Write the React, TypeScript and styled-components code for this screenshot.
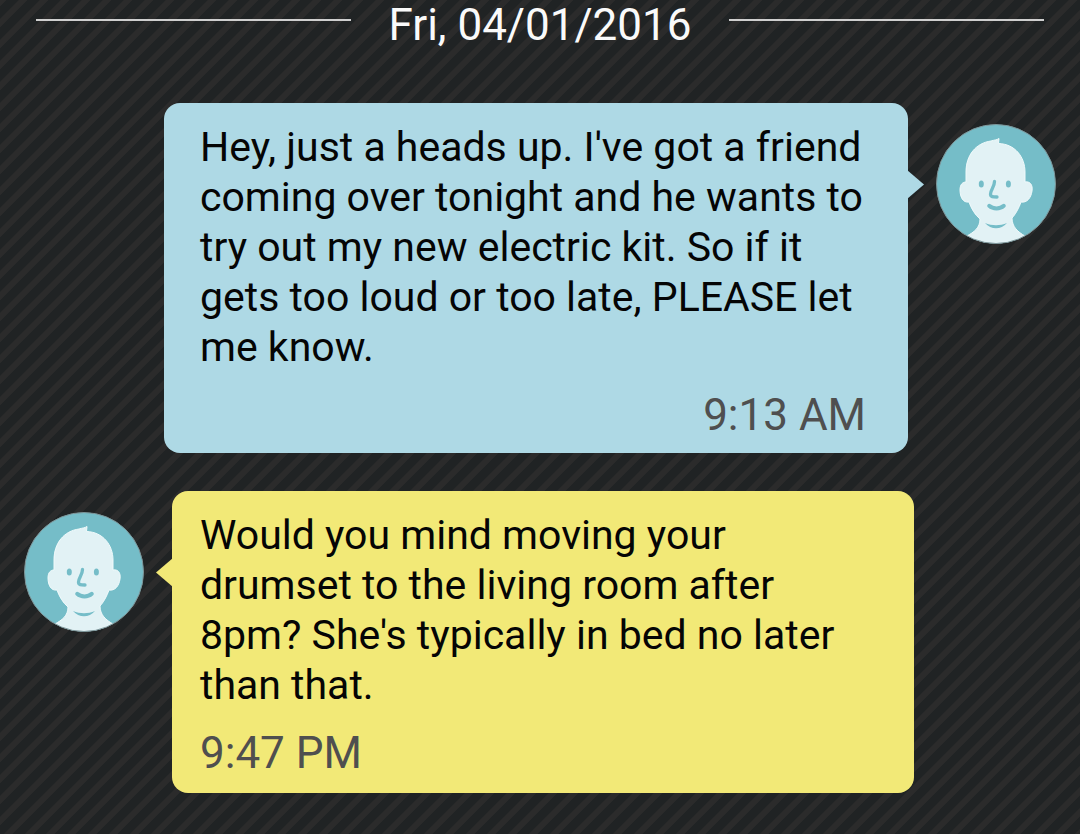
import React from "react";
import styled, { createGlobalStyle } from "styled-components";

const GlobalStyle = createGlobalStyle`
  *, *::before, *::after { box-sizing: border-box; }
  body {
    margin: 0;
    min-height: 100vh;
    background: linear-gradient(
      135deg,
      #2b2b2b 0 14%, #202324 16% 44%,
      #2b2b2b 46% 64%, #202324 66% 94%, #2b2b2b 96%
    ) 0 0 / 21px 21px;
    font-family: Roboto, "Liberation Sans", sans-serif;
  }
`;

const Conversation = styled.main`
  display: flex;
  flex-direction: column;
  gap: 38px;
`;

const DateDivider = styled.header`
  display: flex;
  align-items: flex-start;
  gap: 37px;
  padding: 0 36px;
  height: 65px;
  color: #fafafa;
  font-size: 44px;
  line-height: 50px;
  white-space: nowrap;
  &::before, &::after {
    content: "";
    flex: 1;
    height: 2px;
    margin-top: 19px;
    background: #cfcfcf;
  }
`;

const DateLabel = styled.time``;

const Row = styled.article<{ $sent?: boolean }>`
  display: flex;
  flex-direction: ${(p) => (p.$sent ? "row-reverse" : "row")};
  align-items: flex-start;
  gap: 28px;
  padding: 0 24px;
`;

const Avatar = styled.svg`
  flex: none;
  width: 120px;
  height: 120px;
  margin-top: 21px;
`;

const Bubble = styled.div<{ $sent?: boolean }>`
  position: relative;
  flex: 1;
  margin: ${(p) => (p.$sent ? "0 0 0 140px" : "0 142px 0 0")};
  padding: ${(p) => (p.$sent ? "19px 28px 13px 36px" : "19px 36px 15px 28px")};
  border-radius: 16px;
  background: ${(p) => (p.$sent ? "#aed9e5" : "#f2e977")};
  &::after {
    content: "";
    position: absolute;
    top: 67px;
    ${(p) => (p.$sent ? "right: -16px;" : "left: -16px;")}
    width: 17px;
    height: 29px;
    background: inherit;
    clip-path: ${(p) => (p.$sent ? "polygon(0 0, 100% 50%, 0 100%)" : "polygon(100% 0, 0 50%, 100% 100%)")};
  }
`;

const Message = styled.p`
  margin: 0;
  color: #050505;
  font-size: 41px;
  line-height: 50px;
`;

const Stamp = styled.time<{ $sent?: boolean }>`
  display: block;
  margin-top: 18px;
  padding-right: 14px;
  color: #4f4f4f;
  font-size: 44px;
  line-height: 50px;
  text-align: ${(p) => (p.$sent ? "right" : "left")};
`;

const Face = ({ id }: { id: string }) => (
  <Avatar viewBox="0 0 120 120" role="img" aria-label="Contact">
    <clipPath id={id}>
      <circle cx="60" cy="60" r="59.5" />
    </clipPath>
    <circle cx="60" cy="60" r="59.5" fill="#75bdc8" />
    <g clipPath={`url(#${id})`}>
      <path
        d="M30 58V48C30 31 40 19 55 17C58 16 61 16 63 14.500L62.500 19.500C79 20 89 33 89 48V58C94 57 97 61 96 67C95 74 91 79 85 78C83 84 79 91 76 94C76 103 82 108 89 112V121H31V112C38 108 44 104 44 95C39 91 35 84 33 78C27 79 24 73 24 66C24 60 27 58 30 58Z"
        fill="#e2f2f5"
        stroke="#f0fafb"
        strokeWidth="1"
        strokeLinejoin="round"
      />
      <ellipse cx="45.300" cy="60" rx="2.500" ry="3.600" fill="#75bdc8" />
      <ellipse cx="72.400" cy="60" rx="2.500" ry="3.600" fill="#75bdc8" />
      <g fill="none" stroke="#75bdc8" strokeWidth="3.300" strokeLinecap="round" strokeLinejoin="round">
        <path d="M58.500 57.500C58.500 63 54.500 66 54.500 70C54.500 73 57 73 61 73" />
        <path d="M53.200 81.800C57 85.300 64 85.300 67.800 81.800" strokeWidth="4" />
      </g>
      <path d="M49 99C56 102 64 102 71 99C65 106 55 106 49 99Z" fill="#75bdc8" />
    </g>
    <circle cx="60" cy="60" r="59.5" fill="none" stroke="#7d9599" strokeWidth="1" />
  </Avatar>
);

export default function App() {
  return (
    <>
      <GlobalStyle />
      <Conversation>
        <DateDivider>
          <DateLabel dateTime="2016-04-01">Fri, 04/01/2016</DateLabel>
        </DateDivider>
        <Row $sent>
          <Face id="sender-clip" />
          <Bubble $sent>
            <Message>
              Hey, just a heads up. I've got a friend coming over tonight and he wants to try out my new electric
              kit. So if it gets too loud or too late, PLEASE let me know.
            </Message>
            <Stamp $sent dateTime="09:13">9:13 AM</Stamp>
          </Bubble>
        </Row>
        <Row>
          <Face id="recipient-clip" />
          <Bubble>
            <Message>
              Would you mind moving your drumset to the living room after 8pm? She's typically in bed no later than
              that.
            </Message>
            <Stamp dateTime="21:47">9:47 PM</Stamp>
          </Bubble>
        </Row>
      </Conversation>
    </>
  );
}
